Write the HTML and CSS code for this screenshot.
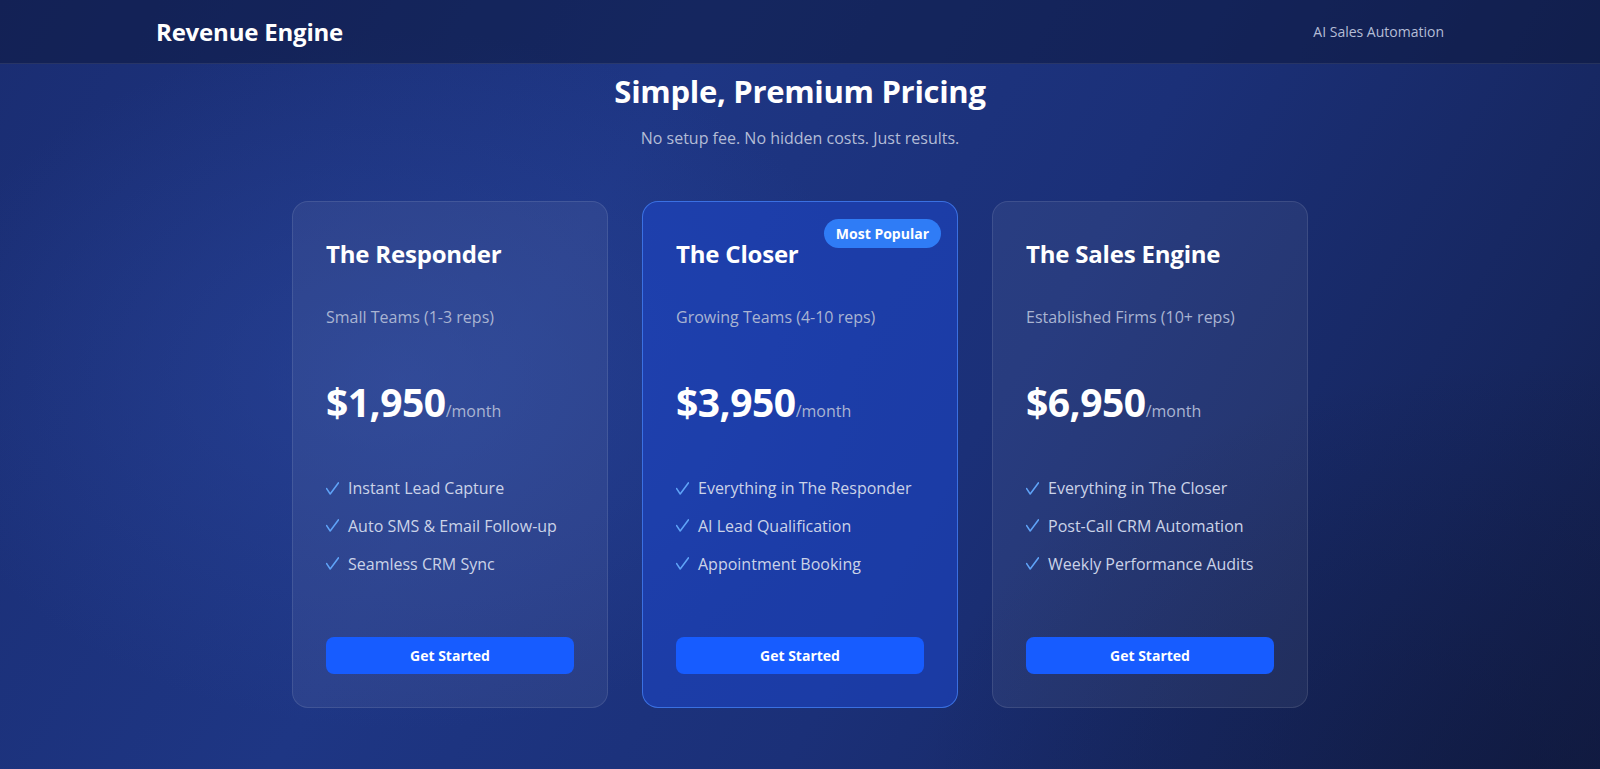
FILE: index.html
```html
<!DOCTYPE html>
<html lang="en">
<head>
  <meta charset="UTF-8">
  <title>Revenue Engine - Pricing</title>
  <link rel="stylesheet" href="styles.css">
</head>
<body>

  <!-- Top bar -->
  <header class="topbar">
    <div class="topbar-inner">
      <div class="logo">Revenue Engine</div>
      <div class="tagline">AI Sales Automation</div>
    </div>
  </header>

  <main class="pricing">
    <h1>Simple, Premium Pricing</h1>
    <p class="lead">No setup fee. No hidden costs. Just results.</p>

    <section class="plans">
      <div class="plan">
        <h3>The Responder</h3>
        <p class="team">Small Teams (1-3 reps)</p>
        <div class="price">$1,950<span>/month</span></div>
        <ul class="features">
          <li><svg class="check" viewBox="0 0 13 13"><path d="M0.5 6.5 L4.2 12 L12.5 0.8"/></svg>Instant Lead Capture</li>
          <li><svg class="check" viewBox="0 0 13 13"><path d="M0.5 6.5 L4.2 12 L12.5 0.8"/></svg>Auto SMS &amp; Email Follow-up</li>
          <li><svg class="check" viewBox="0 0 13 13"><path d="M0.5 6.5 L4.2 12 L12.5 0.8"/></svg>Seamless CRM Sync</li>
        </ul>
        <button class="btn">Get Started</button>
      </div>

      <div class="plan featured">
        <span class="badge">Most Popular</span>
        <h3>The Closer</h3>
        <p class="team">Growing Teams (4-10 reps)</p>
        <div class="price">$3,950<span>/month</span></div>
        <ul class="features">
          <li><svg class="check" viewBox="0 0 13 13"><path d="M0.5 6.5 L4.2 12 L12.5 0.8"/></svg>Everything in The Responder</li>
          <li><svg class="check" viewBox="0 0 13 13"><path d="M0.5 6.5 L4.2 12 L12.5 0.8"/></svg>AI Lead Qualification</li>
          <li><svg class="check" viewBox="0 0 13 13"><path d="M0.5 6.5 L4.2 12 L12.5 0.8"/></svg>Appointment Booking</li>
        </ul>
        <button class="btn">Get Started</button>
      </div>

      <div class="plan">
        <h3>The Sales Engine</h3>
        <p class="team">Established Firms (10+ reps)</p>
        <div class="price">$6,950<span>/month</span></div>
        <ul class="features">
          <li><svg class="check" viewBox="0 0 13 13"><path d="M0.5 6.5 L4.2 12 L12.5 0.8"/></svg>Everything in The Closer</li>
          <li><svg class="check" viewBox="0 0 13 13"><path d="M0.5 6.5 L4.2 12 L12.5 0.8"/></svg>Post-Call CRM Automation</li>
          <li><svg class="check" viewBox="0 0 13 13"><path d="M0.5 6.5 L4.2 12 L12.5 0.8"/></svg>Weekly Performance Audits</li>
        </ul>
        <button class="btn">Get Started</button>
      </div>
    </section>
  </main>

</body>
</html>
```

FILE: styles.css
```css
* {
  margin: 0;
  padding: 0;
  box-sizing: border-box;
}

html, body {
  height: 100%;
}

body {
  font-family: 'Open Sans', 'Noto Sans', sans-serif;
  color: #fff;
  background:
    radial-gradient(ellipse 700px 500px at 400px 380px, rgba(44, 72, 160, 0.55), transparent 70%),
    radial-gradient(ellipse 900px 600px at 1550px 780px, rgba(14, 22, 54, 0.5), transparent 70%),
    linear-gradient(120deg, #1a2d72 0%, #1e3684 35%, #1b3078 60%, #16265e 85%, #131e4a 100%);
  overflow: hidden;
}

/* header */
.topbar {
  height: 64px;
  background: rgba(12, 20, 52, 0.45);
  border-bottom: 1px solid rgba(255, 255, 255, 0.09);
}

.topbar-inner {
  max-width: 1288px;
  height: 100%;
  margin: 0 auto;
  display: flex;
  align-items: center;
  justify-content: space-between;
}

.logo {
  font-size: 24px;
  font-weight: 700;
  letter-spacing: -0.2px;
}

.tagline {
  font-size: 14px;
  color: #b4bdd6;
}

/* pricing */
.pricing {
  text-align: center;
}

.pricing h1 {
  margin-top: 8px;
  font-size: 31px;
  line-height: 38px;
  font-weight: 700;
  letter-spacing: -0.3px;
}

.lead {
  margin-top: 16px;
  font-size: 16px;
  line-height: 24px;
  color: #b3bcd6;
}

.plans {
  display: flex;
  justify-content: center;
  gap: 34px;
  margin-top: 51px;
}

.plan {
  position: relative;
  width: 316px;
  padding: 32px 33px 33px;
  text-align: left;
  background: rgba(255, 255, 255, 0.06);
  border: 1px solid rgba(255, 255, 255, 0.1);
  border-radius: 16px;
}

.plan.featured {
  background: rgba(28, 68, 196, 0.6);
  border-color: rgba(70, 130, 245, 0.75);
}

.badge {
  position: absolute;
  top: 17px;
  right: 16px;
  padding: 0 12px;
  height: 29px;
  line-height: 29px;
  border-radius: 15px;
  background: #2f7cf6;
  font-size: 14px;
  font-weight: 700;
}

.plan h3 {
  font-size: 24px;
  line-height: 40px;
  font-weight: 700;
  letter-spacing: -0.2px;
}

.team {
  margin-top: 31px;
  font-size: 16px;
  line-height: 24px;
  color: #a9b4d2;
}

.price {
  margin-top: 49px;
  font-size: 39px;
  line-height: 48px;
  font-weight: 700;
  letter-spacing: -0.5px;
}

.price span {
  font-size: 16px;
  font-weight: 400;
  letter-spacing: 0;
  color: #a9b4d2;
}

.features {
  list-style: none;
  margin-top: 41px;
}

.features li {
  display: flex;
  align-items: center;
  font-size: 16px;
  line-height: 24px;
  color: #cbd3e8;
  margin-bottom: 13.8px;
}

.features li:last-child {
  margin-bottom: 0;
}

.check {
  width: 13px;
  height: 13px;
  margin-right: 9px;
  fill: none;
  stroke: #5fa3f7;
  stroke-width: 1.5;
  stroke-linecap: round;
  stroke-linejoin: round;
}

.btn {
  display: block;
  width: 100%;
  height: 37px;
  margin-top: 61px;
  border: none;
  border-radius: 8px;
  background: #175cff;
  color: #fff;
  font-family: inherit;
  font-size: 14px;
  font-weight: 700;
  cursor: pointer;
}

.btn:hover {
  background: #2f6dff;
}
```
